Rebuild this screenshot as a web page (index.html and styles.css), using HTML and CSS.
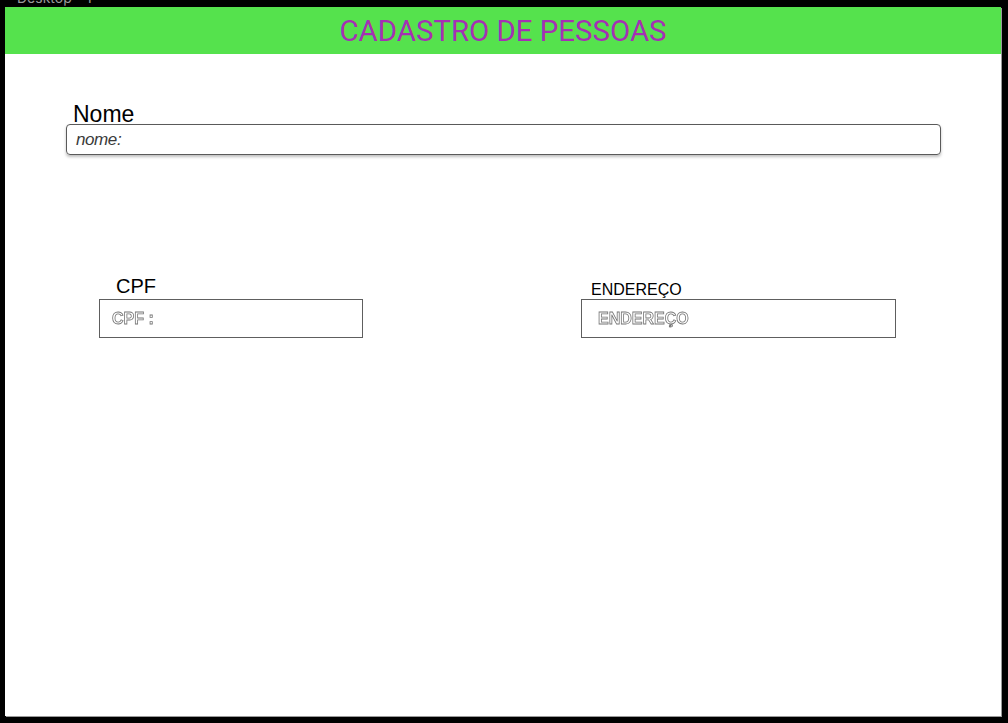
FILE: index.html
```html
<!DOCTYPE html>
<html lang="pt-BR">
<head>
<meta charset="utf-8">
<title>Cadastro de Pessoas</title>
<link rel="stylesheet" href="styles.css">
</head>
<body>
<div class="canvas-label"><span>Desktop - 1</span></div>
<div class="frame">
  <header class="topbar">
    <h1 class="title">CADASTRO DE PESSOAS</h1>
  </header>
  <main class="content">
    <section class="field-nome">
      <label class="label-nome">Nome</label>
      <div class="input-nome"><span class="ph-nome">nome:</span></div>
    </section>
    <section class="row">
      <div class="field field-cpf">
        <label class="label-cpf">CPF</label>
        <div class="box box-cpf"><span class="ph-outline">CPF :</span></div>
      </div>
      <div class="field field-end">
        <label class="label-end">ENDEREÇO</label>
        <div class="box box-end"><span class="ph-outline">ENDEREÇO</span></div>
      </div>
    </section>
  </main>
</div>
</body>
</html>
```
FILE: styles.css
```css
html, body {
  margin: 0;
  padding: 0;
  background: #000;
  height: 100%;
  overflow: hidden;
}

.canvas-label {
  height: 7px;
  overflow: hidden;
  padding-left: 17px;
}
.canvas-label span {
  display: block;
  margin-top: -10px;
  font-family: Inter, "Liberation Sans", sans-serif;
  font-size: 14px;
  line-height: 16px;
  color: #9a9a9a;
}

.frame {
  margin-left: 5px;
  width: 996px;
  height: 709px;
  background: #fff;
  box-shadow: 1px 1px 0 #9a9a9a;
  display: flex;
  flex-direction: column;
}

.topbar {
  height: 47px;
  background: #55e24d;
  display: flex;
  justify-content: center;
}
.title {
  margin: 0;
  padding-top: 2px;
  font-family: Roboto, "Liberation Sans", sans-serif;
  font-weight: 400;
  font-size: 29.4px;
  line-height: 45px;
  color: #a530b4;
}

.content {
  padding: 46px 0 0 61px;
  display: flex;
  flex-direction: column;
}

.field-nome {
  display: flex;
  flex-direction: column;
}
.label-nome {
  padding: 4px 0 0 7px;
  font-family: "Liberation Sans", Arial, sans-serif;
  font-size: 23px;
  line-height: 20px;
  color: #000;
}
.input-nome {
  box-sizing: border-box;
  width: 875px;
  height: 31px;
  border: 1px solid #5a5a5a;
  border-radius: 4px;
  box-shadow: 0 2px 3px rgba(0, 0, 0, 0.25);
  display: flex;
  align-items: center;
  padding-left: 9px;
}
.ph-nome {
  font-family: "Liberation Sans", Arial, sans-serif;
  font-style: italic;
  font-size: 17px;
  letter-spacing: -0.4px;
  color: #3a3a3a;
}

.row {
  margin-top: 120px;
  margin-left: 33px;
  display: flex;
  align-items: flex-end;
  gap: 218px;
}
.field {
  display: flex;
  flex-direction: column;
}
.label-cpf {
  padding-left: 17px;
  padding-bottom: 2px;
  font-family: "Liberation Sans", Arial, sans-serif;
  font-size: 20px;
  line-height: 22px;
  color: #000;
}
.label-end {
  padding-left: 10px;
  padding-bottom: 1px;
  font-family: "Liberation Sans", Arial, sans-serif;
  font-size: 16px;
  line-height: 17px;
  color: #000;
}
.box {
  box-sizing: border-box;
  height: 39px;
  border: 1px solid #5e5e5e;
  display: flex;
  align-items: center;
}
.box-cpf {
  width: 264px;
  padding-left: 12px;
}
.box-end {
  width: 315px;
  padding-left: 16px;
}
.ph-outline {
  font-family: "Liberation Sans", Arial, sans-serif;
  font-weight: 700;
  font-size: 16px;
  color: #fff;
  -webkit-text-stroke: 0.8px #777;
  will-change: transform;
}
```
